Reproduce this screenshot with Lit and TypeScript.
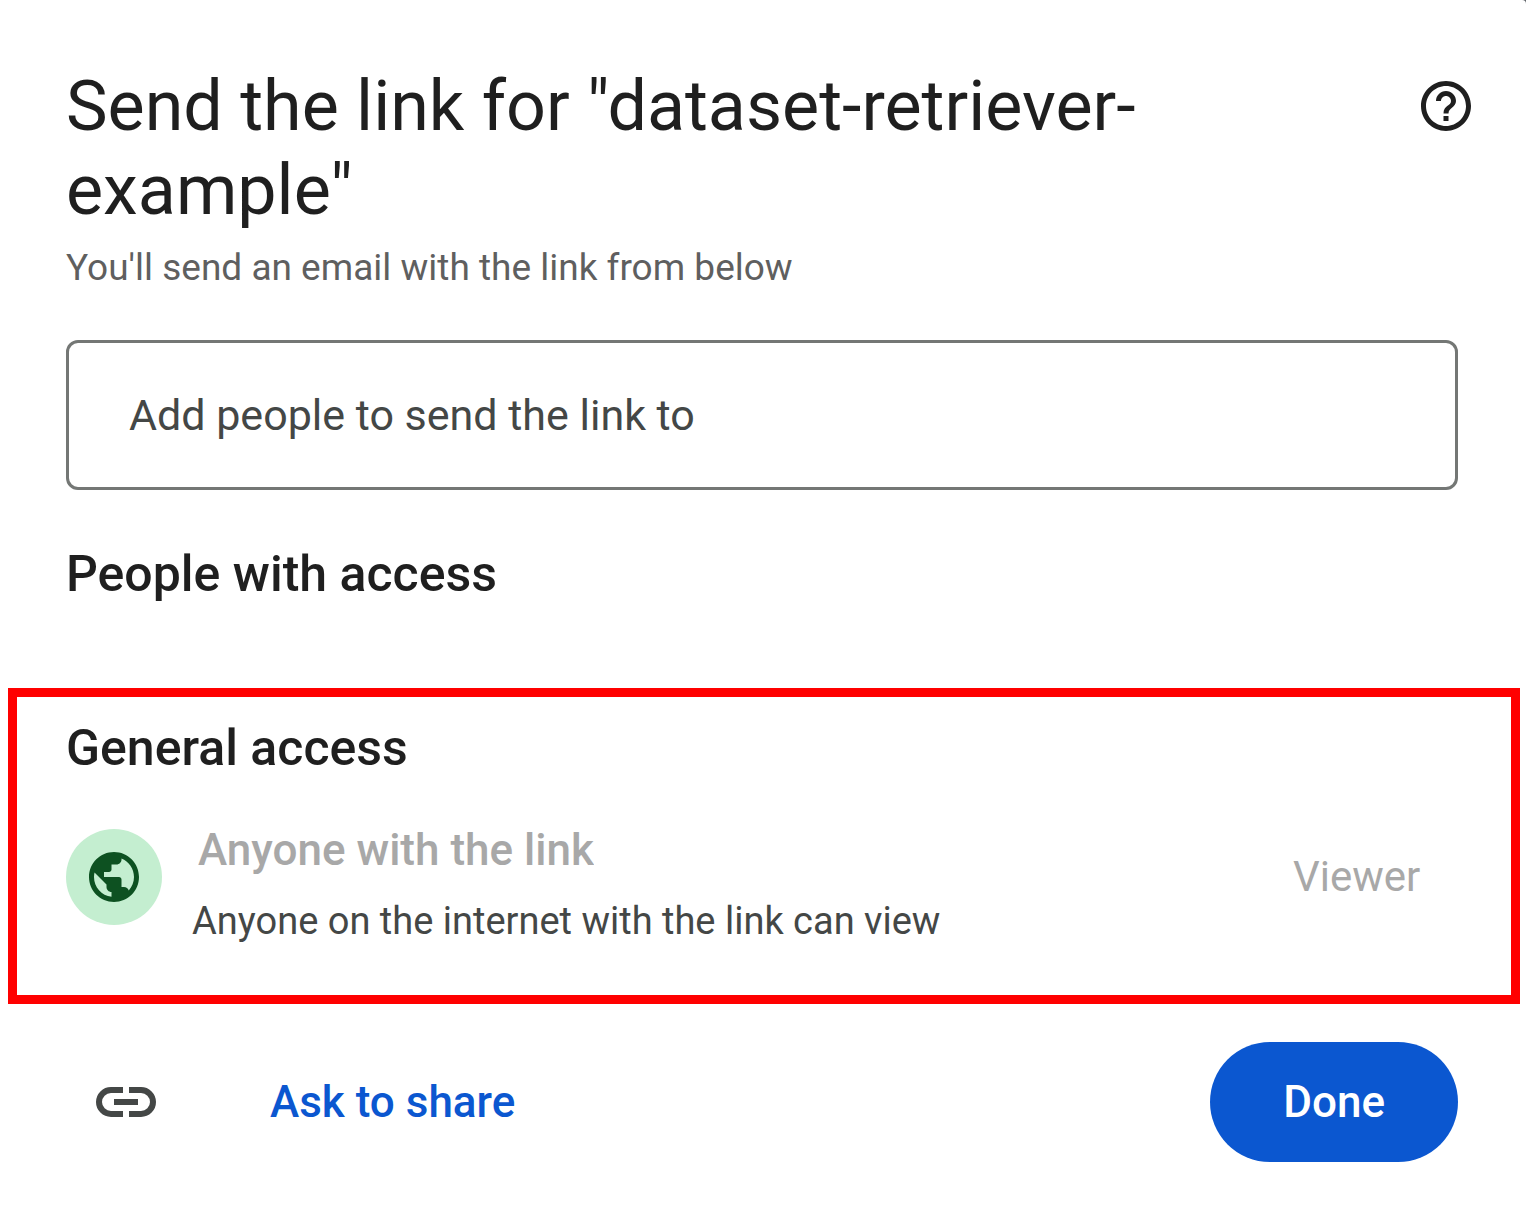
import { LitElement, html, css } from "lit";
import { customElement, property } from "lit/decorators.js";

@customElement("app-root")
export class AppRoot extends LitElement {
  @property() fileName = "dataset-retriever-example";

  static styles = css`
    :host {
      display: block;
      background: #5f6368;
      font-family: Roboto, "Liberation Sans", sans-serif;
      color: #1f1f1f;
    }
    * {
      box-sizing: border-box;
    }
    h1,
    h2,
    p {
      margin: 0;
    }
    button,
    input,
    select {
      font-family: inherit;
      margin: 0;
    }
    svg {
      display: block;
      fill: currentColor;
    }
    .dialog {
      min-height: 100vh;
      padding-top: 64px;
      background: #fff;
      border-top-right-radius: 4px;
    }
    .section {
      padding: 0 68px 0 66px;
    }
    .header {
      display: flex;
      justify-content: space-between;
      align-items: flex-start;
      padding: 0 50px 0 66px;
    }
    .title {
      max-width: 1200px;
      font-size: 70px;
      line-height: 84px;
      font-weight: 400;
    }
    .icon-button {
      display: flex;
      flex: none;
      padding: 0;
      border: 0;
      background: none;
      cursor: pointer;
    }
    .help {
      margin-top: 12px;
      color: #1f1f1f;
    }
    .subtitle {
      margin-top: 12px;
      font-size: 37px;
      line-height: 48px;
      color: #5f5f5f;
    }
    .people-input {
      display: block;
      width: 100%;
      height: 150px;
      margin-top: 48px;
      padding: 0 60px;
      border: 3px solid #747775;
      border-radius: 12px;
      background: #fff;
      font-size: 43px;
      color: #1f1f1f;
    }
    .people-input::placeholder {
      color: #444746;
      opacity: 1;
    }
    .heading {
      font-size: 50px;
      line-height: 72px;
      font-weight: 500;
    }
    .people {
      margin-top: 48px;
    }
    .general {
      margin: 78px 6px 0 8px;
      padding: 15px 50px 44px 49px;
      border: 9px solid #f00;
    }
    .access {
      display: flex;
      align-items: center;
      margin-top: 19px;
    }
    .avatar {
      display: grid;
      place-items: center;
      flex: none;
      width: 96px;
      height: 96px;
      border-radius: 50%;
      background: #c4eed0;
      color: #0d5121;
    }
    .detail {
      flex: 1;
      padding: 17px 0 0 30px;
    }
    .scope,
    .role {
      appearance: none;
      display: block;
      border: 0;
      background: none;
      opacity: 1;
      line-height: 60px;
      color: #a8a8a8;
    }
    .scope {
      padding: 0 6px;
      font-size: 44px;
      font-weight: 500;
    }
    .role {
      padding: 0 40px 0 0;
      font-size: 42px;
    }
    .note {
      margin-top: 11px;
      font-size: 38px;
      line-height: 60px;
      color: #444746;
    }
    .footer {
      display: flex;
      align-items: center;
      padding-top: 38px;
      padding-bottom: 48px;
    }
    .copy {
      padding: 24px;
      color: #444746;
    }
    .ask,
    .done {
      border: 0;
      font-size: 44px;
      line-height: 120px;
      font-weight: 500;
      cursor: pointer;
    }
    .ask {
      margin-left: 36px;
      padding: 0 48px;
      background: none;
      color: #0b57d0;
    }
    .done {
      margin-left: auto;
      padding: 0 73px;
      border-radius: 60px;
      background: #0b57d0;
      color: #fff;
    }
  `;

  render() {
    const title = `Send the link for "${this.fileName}"`;
    return html`
      <main class="dialog">
        <header class="header">
          <h1 class="title">${title}</h1>
          <button class="icon-button help" aria-label="Help">
            <svg width="60" height="60" viewBox="0 0 24 24" aria-hidden="true">
              <path
                d="M11 18h2v-2h-2v2zm1-16C6.48 2 2 6.48 2 12s4.48 10 10 10 10-4.48 10-10S17.52 2 12 2zm0 18c-4.41 0-8-3.59-8-8s3.590-8 8-8 8 3.590 8 8-3.590 8-8 8zm0-14c-2.210 0-4 1.790-4 4h2c0-1.100.9-2 2-2s2 .9 2 2c0 2-3 1.750-3 5h2c0-2.250 3-2.500 3-5 0-2.210-1.790-4-4-4z"
              />
            </svg>
          </button>
        </header>
        <div class="section">
          <p class="subtitle">You'll send an email with the link from below</p>
          <input
            class="people-input"
            type="text"
            aria-label="Add people to send the link to"
            placeholder="Add people to send the link to"
          />
          <h2 class="heading people">People with access</h2>
        </div>
        <section class="general">
          <h2 class="heading">General access</h2>
          <div class="access">
            <span class="avatar">
              <svg width="60" height="60" viewBox="0 0 24 24" aria-hidden="true">
                <path
                  d="M12 2C6.48 2 2 6.48 2 12s4.48 10 10 10 10-4.48 10-10S17.52 2 12 2zm-1 17.93c-3.95-.49-7-3.85-7-7.93 0-.62.08-1.21.21-1.79L9 15v1c0 1.100.9 2 2 2v1.930zm6.900-2.540c-.26-.81-1-1.390-1.900-1.390h-1v-3c0-.55-.45-1-1-1H8v-2h2c.55 0 1-.45 1-1V7h2c1.100 0 2-.9 2-2v-.41c2.930 1.190 5 4.060 5 7.410 0 2.080-.8 3.970-2.100 5.390z"
                />
              </svg>
            </span>
            <div class="detail">
              <select class="scope" aria-label="Who has access" disabled>
                <option>Anyone with the link</option>
              </select>
              <p class="note">Anyone on the internet with the link can view</p>
            </div>
            <select class="role" aria-label="Role" disabled>
              <option>Viewer</option>
            </select>
          </div>
        </section>
        <footer class="section footer">
          <button class="icon-button copy" aria-label="Copy link">
            <svg width="72" height="72" viewBox="0 0 24 24" aria-hidden="true">
              <path
                d="M11 17H7a5 5 0 0 1 0-10h4v2H7a3 3 0 0 0 0 6h4zM8 13v-2h8v2zM13 17v-2h4a3 3 0 0 0 0-6h-4V7h4a5 5 0 0 1 0 10z"
              />
            </svg>
          </button>
          <button class="ask">Ask to share</button>
          <button class="done">Done</button>
        </footer>
      </main>
    `;
  }
}
